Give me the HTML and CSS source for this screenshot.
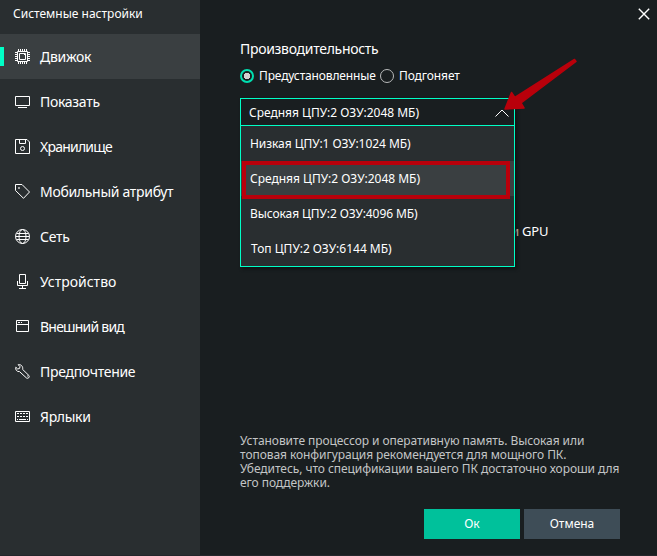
FILE: index.html
```html
<!DOCTYPE html>
<html lang="ru">
<head>
<meta charset="utf-8">
<title>Системные настройки</title>
<link rel="stylesheet" href="styles.css">
</head>
<body>
<div class="window">
  <aside class="sidebar">
    <h1 class="title">Системные настройки</h1>
    <nav class="nav">
      <a class="item active"><svg class="icon" viewBox="0 0 15 15"><path d="M2.500 2.500h10v10h-10zM4.500 4.500h6v6h-6z"/><path d="M3.500 0v2M5.500 0v2M7.500 0v2M9.500 0v2M11.500 0v2M3.500 13v2M5.500 13v2M7.500 13v2M9.500 13v2M11.500 13v2M0 3.500h2M0 5.500h2M0 7.500h2M0 9.500h2M0 11.500h2M13 3.500h2M13 5.500h2M13 7.500h2M13 9.500h2M13 11.500h2M9 5.500h1"/></svg><span>Движок</span></a>
      <a class="item"><svg class="icon" viewBox="0 0 15 15"><path d="M.5 2.500h14v9H.5zM3 13.500h9"/></svg><span>Показать</span></a>
      <a class="item tight"><svg class="icon" viewBox="0 0 15 15"><path d="M.5.5h11.500l2.500 2.500v11.500H.5zM4.500.5v4h6v-4"/><circle cx="7.500" cy="9.500" r="2"/></svg><span>Хранилище</span></a>
      <a class="item"><svg class="icon" viewBox="0 0 15 15"><path d="M.5.5h6.500l7.500 7.500-6 6.300L.5 6.500z"/><circle cx="4" cy="4" r=".5"/></svg><span>Мобильный атрибут</span></a>
      <a class="item"><svg class="icon" viewBox="0 0 15 15"><circle cx="7.500" cy="7.500" r="7"/><ellipse cx="7.500" cy="7.500" rx="3.500" ry="7"/><path d="M1.500 4.500h12M.5 7.500h14M1.500 10.500h12"/></svg><span>Сеть</span></a>
      <a class="item wide"><svg class="icon" viewBox="0 0 15 15"><path d="M4.500.5h6v9h-6zM2.500 7v4.500h10V7M7.500 11.500v3M4 14.500h7"/></svg><span>Устройство</span></a>
      <a class="item tight"><svg class="icon" viewBox="0 0 15 15"><path d="M1.500 1.500h12v11h-12zM1.500 5.500h12M3 3.500h2M6 3.500h1"/></svg><span>Внешний вид</span></a>
      <a class="item"><svg class="icon" viewBox="0 0 15 15"><path d="M3.200.7 5 2.700 4.600 4.400 2.700 5 .8 3.200C.1 5.500 1.800 8 4.500 7.600L11.500 14C13 15 15 13.300 14 11.600L7.600 5.400C8.300 2.500 6 .1 3.200.7z"/><path d="M12 12h.8"/></svg><span>Предпочтение</span></a>
      <a class="item"><svg class="icon" viewBox="0 0 15 15"><path d="M.5 2.500h14v10H.5z"/><path d="M2 4.500h11M2 7.500h11" stroke-dasharray="2 1"/><path d="M2 10.500h1M4 10.500h7M12 10.500h1"/></svg><span>Ярлыки</span></a>
    </nav>
  </aside>
  <main class="content">
    <h2 class="heading">Производительность</h2>
    <div class="radios">
      <i class="radio on"></i><span class="preset">Предустановленные</span><i class="radio"></i><span class="custom">Подгоняет</span>
    </div>
    <div class="select">
      <div class="value"><span>Средняя ЦПУ:2 ОЗУ:2048 МБ)</span>
        <svg class="chevron" viewBox="0 0 14 8"><path d="M.5 7.500 7 1l6.500 6.500"/></svg></div>
      <div class="option">Низкая ЦПУ:1 ОЗУ:1024 МБ)</div>
      <div class="option selected">Средняя ЦПУ:2 ОЗУ:2048 МБ)<i class="mark"></i></div>
      <div class="option">Высокая ЦПУ:2 ОЗУ:4096 МБ)</div>
      <div class="option top">Топ ЦПУ:2 ОЗУ:6144 МБ)</div>
      <span class="gpu">и GPU</span>
    </div>
    <p class="note">Установите процессор и оперативную память. Высокая или<br>топовая конфигурация рекомендуется для мощного ПК.<br>Убедитесь, что спецификации вашего ПК достаточно хороши для<br>его поддержки.</p>
    <div class="buttons"><button class="ok">Ок</button><button class="cancel">Отмена</button></div>
    <svg class="close" viewBox="0 0 12 12"><path d="m.8.8 10.400 10.400M11.200.8.8 11.200"/></svg>
    <svg class="arrow" viewBox="0 0 80 60"><path d="m5 54 6.500-16.500 3.300 5L74.500 4.500l1.500 2L21 48l3 5z"/></svg>
  </main>
</div>
</body>
</html>
```

FILE: styles.css
```css
* { box-sizing: border-box; }
body { margin: 0; background: #191e20; color: #fff; font: 12px/14px "Noto Sans", sans-serif; }
.window { position: relative; display: flex; width: 657px; height: 556px; border-bottom: 1px solid #24262b; }
.sidebar { flex: none; width: 200px; background: #292e30; }
.title { height: 34px; margin: 0; padding: 6px 0 0 13px; font-size: 12px; font-weight: 400; line-height: 15px; }
.item { display: flex; align-items: center; height: 45px; padding-left: 15px; gap: 10px; font-size: 14px; line-height: 20px; letter-spacing: -.3px; white-space: nowrap; }
.tight { letter-spacing: -.78px; }
.wide { letter-spacing: 0; }
.active { background: linear-gradient(#00ffc6, #00ffc6) 0 13px / 4px 19px no-repeat #3a3f41; }
.icon { width: 15px; height: 15px; flex: none; }
svg { fill: none; stroke: #fff; stroke-width: 1; }
.content { display: flex; flex-direction: column; flex: 1; min-width: 0; padding: 39px 36px 16px 40px; }
.heading { margin: 0; font-size: 14px; line-height: 20px; font-weight: 400; letter-spacing: -.3px; }
.radios { display: flex; align-items: center; height: 14px; margin-top: 10px; font-size: 12px; white-space: nowrap; }
.radio { flex: none; width: 14px; height: 14px; border: 1.500px solid #b8babb; border-radius: 50%; }
.radio.on { border: 2px solid #00dfb0; background: radial-gradient(circle, #d0d0d0 0 3px, transparent 3.500px); }
.preset { width: 121px; margin-left: 5px; letter-spacing: -.15px; }
.custom { margin-left: 5px; letter-spacing: -.1px; }
.select { position: relative; width: 275px; height: 169px; margin-top: 15px; border: 1px solid #00ffc6; background: #292e30; box-shadow: 2px 2px 3px #101314; }
.value { display: flex; align-items: center; justify-content: space-between; height: 27px; padding: 1px 5px 0 8px; border-bottom: 1px solid #00ffc6; background: #191e20; }
.chevron { width: 14px; height: 8px; }
.option { position: relative; height: 35px; padding-left: 9px; line-height: 35px; white-space: nowrap; }
.option:nth-child(2) { letter-spacing: -.06px; }
.option:nth-child(4) { letter-spacing: -.08px; }
.selected { background: #3a3f41; }
.top { padding-left: 10px; }
.mark { position: absolute; left: 1px; top: 0; width: 268px; height: 38px; border: 4px solid #b9000b; }
.gpu { position: absolute; z-index: -1; left: 270px; top: 123px; font-size: 13px; line-height: 18px; letter-spacing: -.2px; white-space: nowrap; }
.note { margin: auto 0 0; color: #c3c5c6; letter-spacing: -.07px; white-space: nowrap; }
.buttons { display: flex; gap: 4px; margin: 19px 0 0 184px; }
button { flex: none; width: 96px; height: 30px; padding: 0; border: 0; background: #3e4d57; color: #fff; font: inherit; }
.ok { background: #00c19b; }
.close { position: absolute; left: 638px; top: 8px; width: 12px; height: 12px; stroke-width: 1.400; }
.arrow { position: absolute; left: 500px; top: 55px; width: 80px; height: 60px; fill: #b9000b; stroke: #b9000b; stroke-width: 1.500; stroke-linejoin: round; }
```
